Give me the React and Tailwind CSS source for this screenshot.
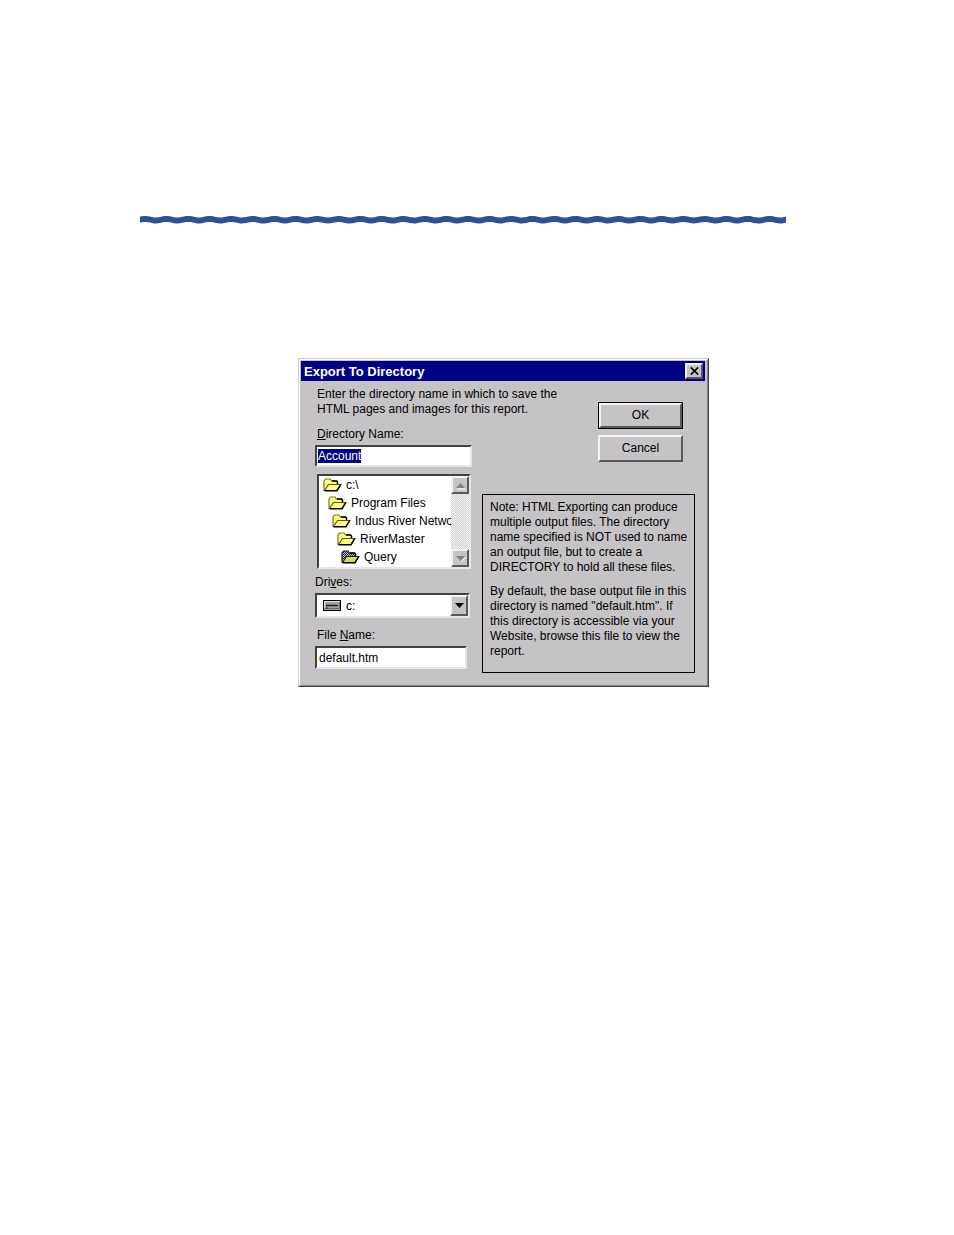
import { useEffect, useRef } from 'react';

const folders = [
  { name: 'c:\\', indent: 'pl-[4px]' },
  { name: 'Program Files', indent: 'pl-[9px]' },
  { name: 'Indus River Networks', indent: 'pl-[13px]' },
  { name: 'RiverMaster', indent: 'pl-[18px]' },
  { name: 'Query', indent: 'pl-[22px]', current: true },
];

const raised =
  'bg-[#c6c3c6] border-2 border-t-[#f4f2f4] border-l-[#f4f2f4] border-r-[#5a585a] border-b-[#5a585a]';
const sunken =
  'bg-white border-2 border-t-[#424142] border-l-[#424142] border-r-[#e7e5e7] border-b-[#e7e5e7]';

function wavePath() {
  const top = [];
  const bottom = [];
  for (let x = 0; x <= 646; x += 2) {
    const y = 4.7 - 0.8 * Math.cos(((x - 5) / 21.53) * Math.PI * 2);
    top.push(`${x} ${(y - 3).toFixed(2)}`);
    bottom.unshift(`${x} ${(y + 3).toFixed(2)}`);
  }
  return `M${top.join('L')}L${bottom.join('L')}Z`;
}

function Wave() {
  return (
    <svg className="block h-[10px] w-full" viewBox="0 0 646 10" preserveAspectRatio="none" aria-hidden="true">
      <path d={wavePath()} fill="#2d5097" />
    </svg>
  );
}

function Folder({ current }) {
  return (
    <svg className="h-[14px] w-[19px] shrink-0" viewBox="0 0 19 14" aria-hidden="true">
      <defs>
        <pattern id="dots" width="2" height="2" patternUnits="userSpaceOnUse">
          <rect width="2" height="2" fill="#c6c3c6" />
          <rect width="1" height="1" fill="#222" />
          <rect x="1" y="1" width="1" height="1" fill="#222" />
        </pattern>
      </defs>
      <path
        d="M1 12V3L2.5 1H7L8.5 3H13.5L14.5 4V12Z"
        fill={current ? 'url(#dots)' : '#ffff7b'}
        stroke={current ? '#222' : '#7b7921'}
        strokeWidth="1.2"
      />
      <path d="M14 12.5L15 9.5V12Z" fill="#fff" />
      <path
        d="M1.5 12.5L5.5 6.5H17.8L14 12.5Z"
        fill={current ? '#dedb5a' : '#ffff7b'}
        stroke={current ? '#222' : '#5a5810'}
        strokeWidth="1.2"
      />
      <path d="M9 3H13.5L14.5 4V6M17.8 6.5L14 12.7H1.5" fill="none" stroke="#000" strokeWidth="1.4" />
    </svg>
  );
}

function Drive() {
  return (
    <svg className="pointer-events-none absolute left-[6px] h-[11px] w-[18px]" viewBox="0 0 18 11" aria-hidden="true">
      <rect x="0.5" y="0.5" width="17" height="10" fill="#a5a2a5" stroke="#000" />
      <path d="M1 1.5H17M1.5 1V8" stroke="#dedede" />
      <path d="M3 5.5H15" stroke="#222" strokeWidth="1.6" />
      <path d="M2 8.5H17M16.5 2V9" stroke="#6b696b" />
      <path d="M3 8H5" stroke="#222" />
    </svg>
  );
}

function Arrow({ up, color = '#848284' }) {
  return (
    <svg className="h-[5px] w-[9px] overflow-visible" viewBox="0 0 9 5" aria-hidden="true">
      {color === '#848284' && <path d={up ? 'M1 6H10' : 'M5 6L10 1'} stroke="#fff" />}
      <path d={up ? 'M0 5L4.5 0L9 5Z' : 'M0 0H9L4.5 5Z'} fill={color} />
    </svg>
  );
}

function ScrollButton({ up }) {
  return (
    <button
      type="button"
      aria-label={up ? 'Scroll up' : 'Scroll down'}
      className={`${raised} flex h-[18px] w-full items-center justify-center`}
    >
      <Arrow up={up} />
    </button>
  );
}

export default function App() {
  const directory = useRef(null);
  useEffect(() => {
    directory.current.focus();
    directory.current.select();
  }, []);

  return (
    <main className="min-h-screen bg-white px-[140px] pt-[215px] font-['Liberation_Sans',Arial,sans-serif] text-[12px] leading-[15px] text-black">
      <div className="mr-[28px]">
        <Wave />
      </div>

      <form
        aria-labelledby="dialog-title"
        onSubmit={(e) => e.preventDefault()}
        className="mt-[133px] ml-[158px] max-w-[411px] border border-t-[#d0ced0] border-l-[#d0ced0] border-r-[#424142] border-b-[#424142]"
      >
        <div className="border border-t-white border-l-white border-r-[#848284] border-b-[#848284] bg-[#c6c3c6] p-px pr-[2px]">
          <header className="flex h-[20px] items-center justify-between bg-[#000084] pr-[2px] pl-[3px]">
            <h1 id="dialog-title" className="text-[13px] font-bold text-white">
              Export To Directory
            </h1>
            <button type="button" aria-label="Close" className={`${raised} flex h-[16px] w-[18px] items-center justify-center`}>
              <svg className="h-[8px] w-[9px]" viewBox="0 0 9 8" aria-hidden="true">
                <path d="M0.8 0.5L8.2 7.5M8.2 0.5L0.8 7.5" stroke="#000" strokeWidth="1.7" />
              </svg>
            </button>
          </header>

          <div className="pt-[6px] pr-[10px] pb-[11px] pl-[14px]">
            <div className="flex justify-between">
              <div>
                <p className="pl-[2px]">
                  Enter the directory name in which to save the
                  <br />
                  HTML pages and images for this report.
                </p>
                <label htmlFor="directory" className="mt-[10px] block pl-[2px]">
                  <u>D</u>irectory Name:
                </label>
                <input
                  ref={directory}
                  id="directory"
                  defaultValue="Account"
                  className={`${sunken} mt-[3px] block h-[22px] w-[157px] px-px outline-none selection:bg-[#000084] selection:text-white`}
                />
              </div>
              <div className="mt-[15px] mr-[12px] flex w-[85px] flex-col gap-[6px]">
                <button type="submit" className="h-[27px] border border-black">
                  <span className={`${raised} flex h-full items-center justify-center`}>OK</span>
                </button>
                <button type="button" className={`${raised} h-[27px]`}>
                  Cancel
                </button>
              </div>
            </div>

            <div className="mt-[7px] flex items-start gap-[11px]">
              <div className="w-[156px] shrink-0">
                <div className={`${sunken} ml-[2px] flex h-[95px]`}>
                  <ul role="listbox" aria-label="Folders" className="min-w-0 flex-1 overflow-hidden">
                    {folders.map((f) => (
                      <li
                        key={f.name}
                        role="option"
                        aria-selected={Boolean(f.current)}
                        className={`${f.indent} flex h-[18px] items-center gap-[4px] whitespace-nowrap`}
                      >
                        <Folder current={f.current} />
                        {f.name}
                      </li>
                    ))}
                  </ul>
                  <div className="flex w-[18px] flex-col justify-between bg-[repeating-conic-gradient(#f4f2f4_0_25%,#d2d0d2_0_50%)] bg-[length:2px_2px]">
                    <ScrollButton up />
                    <ScrollButton />
                  </div>
                </div>

                <label htmlFor="drives" className="mt-[6px] block">
                  Dri<u>v</u>es:
                </label>
                <div className={`${sunken} relative mt-[3px] mr-px flex h-[25px] items-center`}>
                  <Drive />
                  <select id="drives" className="h-full w-full appearance-none pt-px pl-[29px] outline-none">
                    <option>c:</option>
                  </select>
                  <span className={`${raised} pointer-events-none absolute inset-y-0 right-0 flex w-[18px] items-center justify-center`}>
                    <Arrow color="#000" />
                  </span>
                </div>

                <label htmlFor="file" className="mt-[10px] block pl-[2px]">
                  File <u>N</u>ame:
                </label>
                <input
                  id="file"
                  defaultValue="default.htm"
                  className={`${sunken} mt-[3px] block h-[23px] w-[152px] px-[2px] outline-none`}
                />
              </div>

              <section className="mt-[20px] flex-1 border border-black pt-[5px] pb-[13px] pl-[7px]">
                <p>
                  Note: HTML Exporting can produce
                  <br />
                  multiple output files. The directory
                  <br />
                  name specified is NOT used to name
                  <br />
                  an output file, but to create a
                  <br />
                  DIRECTORY to hold all these files.
                </p>
                <p className="mt-[9px]">
                  By default, the base output file in this
                  <br />
                  directory is named "default.htm". If
                  <br />
                  this directory is accessible via your
                  <br />
                  Website, browse this file to view the
                  <br />
                  report.
                </p>
              </section>
            </div>
          </div>
        </div>
      </form>
    </main>
  );
}
